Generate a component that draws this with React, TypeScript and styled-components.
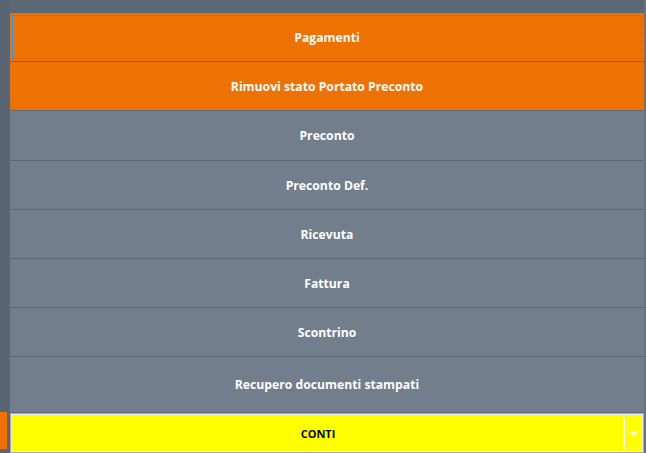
import React from "react";
import styled, { createGlobalStyle } from "styled-components";

const GlobalStyle = createGlobalStyle`
  html, body {
    margin: 0;
    padding: 0;
    background: #5d6877;
    font-family: "Open Sans", "Noto Sans", sans-serif;
  }
`;

const Screen = styled.div`
  display: flex;
  width: 646px;
  height: 453px;
  overflow: hidden;
  background: #5d6877;
`;

const LeftRail = styled.div`
  width: 10px;
  display: flex;
  flex-direction: column;
  justify-content: flex-end;
  padding-bottom: 4px;
  box-sizing: border-box;
  background: #5a6573;
`;

const RailMark = styled.div`
  width: 7px;
  height: 37px;
  background: #ee7203;
`;

const Main = styled.div`
  flex: 1;
  display: flex;
  flex-direction: column;
  padding-top: 13px;
`;

const RightEdge = styled.div`
  width: 2px;
  background: #68737f;
`;

const Menu = styled.div`
  display: flex;
  flex-direction: column;
  gap: 1px;
  background: #5d6877;
`;

const MenuButton = styled.div<{ $accent?: boolean; $focused?: boolean; $h?: number }>`
  position: relative;
  height: ${(p) => p.$h ?? 48}px;
  display: flex;
  align-items: center;
  justify-content: center;
  background: ${(p) => (p.$accent ? "#ee7203" : "#727e8c")};
  color: #ffffff;
  font-weight: 700;
  font-size: 12.2px;

  ${(p) =>
    p.$focused &&
    `
    &::after {
      content: "";
      position: absolute;
      inset: 2px 2px 2px 2px;
      border: 1px dotted #1e8cf0;
    }
  `}
`;

const Combo = styled.div`
  margin-top: 1px;
  height: 40px;
  box-sizing: border-box;
  display: flex;
  align-items: stretch;
  background: #ffff00;
  border: 1px solid #a8a8c8;
  box-shadow: inset 0 0 0 1px #e6e6f2;
  padding: 2px;
`;

const ComboText = styled.div`
  flex: 1;
  display: flex;
  align-items: center;
  justify-content: center;
  font-size: 11px;
  font-weight: 700;
  color: #000000;
`;

const ComboToggle = styled.div`
  width: 16px;
  margin: 2px 0 1px;
  border-left: 2px solid #ffffff;
  display: flex;
  align-items: center;
  justify-content: center;
`;

const items: { label: string; h: number }[] = [
  { label: "Preconto", h: 49 },
  { label: "Preconto Def.", h: 48 },
  { label: "Ricevuta", h: 48 },
  { label: "Fattura", h: 48 },
  { label: "Scontrino", h: 48 },
  { label: "Recupero documenti stampati", h: 55 },
];

export default function App() {
  return (
    <>
      <GlobalStyle />
      <Screen>
        <LeftRail>
          <RailMark />
        </LeftRail>
        <Main>
          <Menu>
            <MenuButton $accent $focused>
              Pagamenti
            </MenuButton>
            <MenuButton $accent>Rimuovi stato Portato Preconto</MenuButton>
            {items.map((it) => (
              <MenuButton key={it.label} $h={it.h}>
                {it.label}
              </MenuButton>
            ))}
          </Menu>
          <Combo>
            <ComboText>CONTI</ComboText>
            <ComboToggle>
              <svg width="9" height="5" viewBox="0 0 9 5">
                <path d="M0 0 L9 0 L4.5 5 Z" fill="#ffffff" />
              </svg>
            </ComboToggle>
          </Combo>
        </Main>
        <RightEdge />
      </Screen>
    </>
  );
}
